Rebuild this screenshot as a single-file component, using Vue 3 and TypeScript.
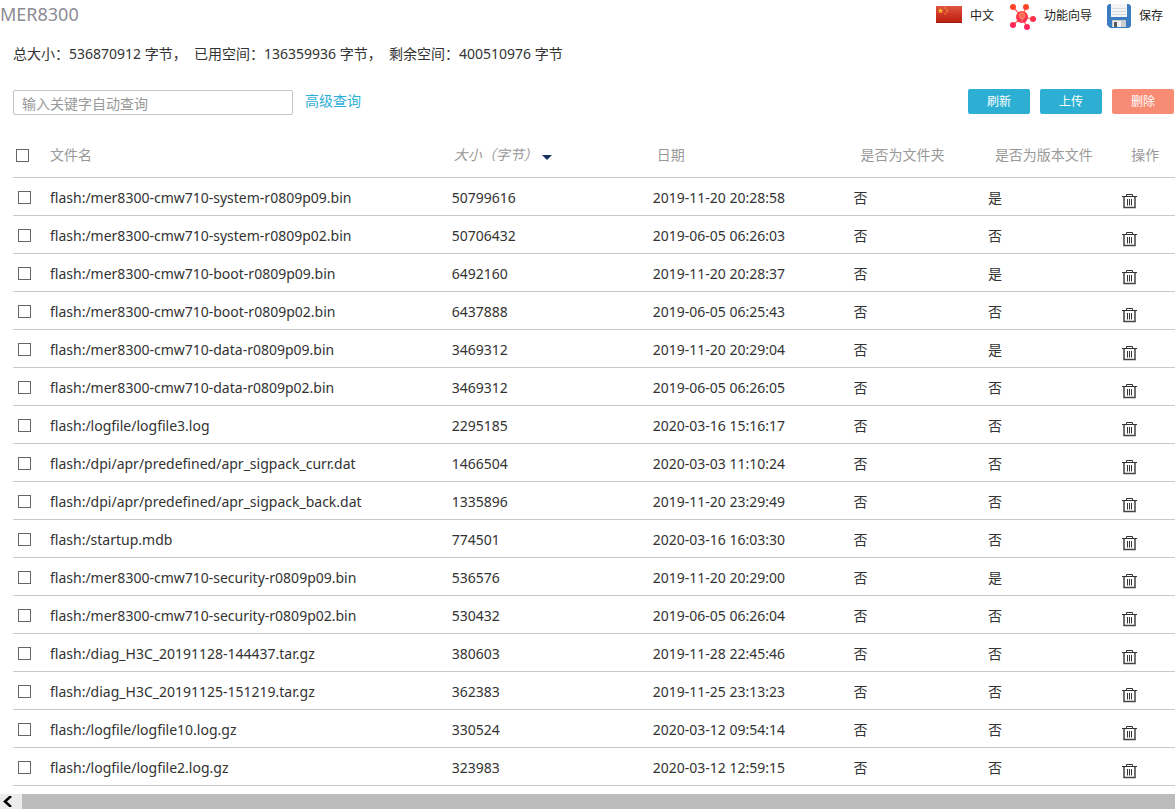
<script setup lang="ts">
import { ref } from 'vue'

interface FlashFile {
  name: string
  size: number
  date: string
  folder: boolean
  version: boolean
}

const raw: [string, number, string, boolean][] = [
  ['mer8300-cmw710-system-r0809p09.bin', 50799616, '2019-11-20 20:28:58', true],
  ['mer8300-cmw710-system-r0809p02.bin', 50706432, '2019-06-05 06:26:03', false],
  ['mer8300-cmw710-boot-r0809p09.bin', 6492160, '2019-11-20 20:28:37', true],
  ['mer8300-cmw710-boot-r0809p02.bin', 6437888, '2019-06-05 06:25:43', false],
  ['mer8300-cmw710-data-r0809p09.bin', 3469312, '2019-11-20 20:29:04', true],
  ['mer8300-cmw710-data-r0809p02.bin', 3469312, '2019-06-05 06:26:05', false],
  ['logfile/logfile3.log', 2295185, '2020-03-16 15:16:17', false],
  ['dpi/apr/predefined/apr_sigpack_curr.dat', 1466504, '2020-03-03 11:10:24', false],
  ['dpi/apr/predefined/apr_sigpack_back.dat', 1335896, '2019-11-20 23:29:49', false],
  ['startup.mdb', 774501, '2020-03-16 16:03:30', false],
  ['mer8300-cmw710-security-r0809p09.bin', 536576, '2019-11-20 20:29:00', true],
  ['mer8300-cmw710-security-r0809p02.bin', 530432, '2019-06-05 06:26:04', false],
  ['diag_H3C_20191128-144437.tar.gz', 380603, '2019-11-28 22:45:46', false],
  ['diag_H3C_20191125-151219.tar.gz', 362383, '2019-11-25 23:13:23', false],
  ['logfile/logfile10.log.gz', 330524, '2020-03-12 09:54:14', false],
  ['logfile/logfile2.log.gz', 323983, '2020-03-12 12:59:15', false],
]

const files: FlashFile[] = raw.map(([name, size, date, version]) => ({
  name: 'flash:/' + name,
  size,
  date,
  folder: false,
  version,
}))

const keyword = ref('')
const selected = ref<string[]>([])
const yesNo = (value: boolean): string => (value ? '是' : '否')

function toggleAll(event: Event): void {
  selected.value = (event.target as HTMLInputElement).checked ? files.map((f) => f.name) : []
}
</script>

<template>
  <div class="page">
    <header class="topbar">
      <h1>MER8300</h1>
      <nav class="tools">
        <a href="#" class="tool">
          <svg class="flag" width="26" height="17" viewBox="0 0 26 17" aria-hidden="true">
            <defs>
              <linearGradient id="flagRed" x1="0" y1="0" x2="0" y2="1">
                <stop offset="0" stop-color="#dd5843" />
                <stop offset="0.5" stop-color="#cf3423" />
                <stop offset="1" stop-color="#b8200f" />
              </linearGradient>
            </defs>
            <rect width="26" height="17" fill="url(#flagRed)" />
            <path d="M4.500 2l.8 1.800 2 .2-1.500 1.300.5 2-1.800-1.100-1.800 1.100.5-2L1.700 4l2-.2z" fill="#fbb52a" />
            <g fill="#f3a02a">
              <circle cx="9" cy="2" r=".8" /><circle cx="11" cy="4" r=".8" />
              <circle cx="11" cy="6" r=".8" /><circle cx="9" cy="8" r=".8" />
            </g>
            <path d="M0 16.500h26" stroke="#9c1b0e" />
          </svg>
          <span>中文</span>
        </a>
        <a href="#" class="tool">
          <svg width="27" height="27" viewBox="0 0 27 27" aria-hidden="true">
            <defs>
              <linearGradient id="hub" gradientUnits="userSpaceOnUse" x1="0" y1="0" x2="0" y2="27">
                <stop offset="0" stop-color="#ff4a1c" />
                <stop offset="1" stop-color="#ff2068" />
              </linearGradient>
            </defs>
            <path d="M13 14L4 4M13 14L17 4M13 14L24 16M13 14L4 22M13 14L18 24" stroke="#ff5a4c" stroke-width="1.200" />
            <g fill="url(#hub)">
              <circle cx="13" cy="14" r="6" /><circle cx="4" cy="4" r="3" />
              <circle cx="17" cy="4" r="3" /><circle cx="24" cy="16" r="3" />
              <circle cx="4" cy="22" r="3" /><circle cx="18" cy="24" r="3" />
            </g>
            <path d="M11.500 16c0-1.500-1.300-2-1.300-3.500a2.800 2.800 0 0 1 5.600 0c0 1.500-1.300 2-1.300 3.500zM12 18h2" fill="#ff6a54" stroke="#ff9484" stroke-width=".8" />
          </svg>
          <span>功能向导</span>
        </a>
        <a href="#" class="tool">
          <svg width="24" height="24" viewBox="0 0 24 24" aria-hidden="true">
            <path d="M2 0h20l2 2v20l-2 2H3l-3-3V2z" fill="#3c7cc0" />
            <path d="M4 0h16v13H4z" fill="#f3f4f5" />
            <path d="M5 4.500h14M5 7.500h14M5 10.500h14" stroke="#d6dadd" />
            <path d="M5 16h14v7H5z" fill="#c9cdd0" />
            <path d="M6 17h8v6H6z" fill="#f0f1f2" />
            <path d="M7 18h3v5H7z" fill="#55595e" />
          </svg>
          <span>保存</span>
        </a>
      </nav>
    </header>

    <p class="summary">
      总大小：536870912 字节，&nbsp;&nbsp;已用空间：136359936 字节，&nbsp;&nbsp;剩余空间：400510976 字节
    </p>

    <div class="toolbar">
      <input v-model="keyword" class="search" type="text" placeholder="输入关键字自动查询" aria-label="输入关键字自动查询" />
      <a href="#" class="advanced">高级查询</a>
      <div class="actions">
        <button type="button">刷新</button>
        <button type="button">上传</button>
        <button type="button" class="danger">删除</button>
      </div>
    </div>

    <div class="grid">
      <table>
        <colgroup>
          <col class="c-check" /><col class="c-name" /><col class="c-wide" /><col class="c-wide" />
          <col class="c-flag" /><col class="c-flag" /><col />
        </colgroup>
        <thead>
          <tr>
            <th class="check">
              <input type="checkbox" aria-label="全选" :checked="selected.length === files.length" @change="toggleAll" />
            </th>
            <th>文件名</th>
            <th class="sorted" aria-sort="descending">大小（字节）<i class="caret"></i></th>
            <th class="mid">日期</th>
            <th class="far">是否为文件夹</th>
            <th class="far">是否为版本文件</th>
            <th class="last">操作</th>
          </tr>
        </thead>
        <tbody>
          <tr v-for="file in files" :key="file.name">
            <td class="check"><input v-model="selected" type="checkbox" :value="file.name" :aria-label="file.name" /></td>
            <td>{{ file.name }}</td>
            <td>{{ file.size }}</td>
            <td>{{ file.date }}</td>
            <td>{{ yesNo(file.folder) }}</td>
            <td>{{ yesNo(file.version) }}</td>
            <td>
              <button type="button" class="trash" :aria-label="'删除 ' + file.name">
                <svg width="15" height="16" viewBox="0 0 15 16" aria-hidden="true">
                  <path d="M0 3.500h15M4.500 3V1.500h6V3M5.500 6v6.500M7.500 6v6.500M9.500 6v6.500" fill="none" stroke="#333" />
                  <path d="M2 4v10.500h11V4" fill="none" stroke="#444" stroke-width="1.500" />
                </svg>
              </button>
            </td>
          </tr>
        </tbody>
      </table>
    </div>

    <div class="hscroll">
      <button type="button" aria-label="向左滚动">
        <svg width="9" height="11" viewBox="0 0 9 11" aria-hidden="true">
          <path d="M8 0L2 5.500L8 11" fill="none" stroke="#000" stroke-width="2.500" />
        </svg>
      </button>
      <div class="thumb"></div>
    </div>
  </div>
</template>

<style>
body {
  background: #fff;
  overflow: hidden;
}
</style>

<style scoped>
.page {
  display: flex;
  flex-direction: column;
  min-height: 100vh;
  overflow: hidden;
  color: #333;
  font-family: 'Noto Sans', 'Noto Sans CJK SC', sans-serif;
  font-size: 14px;
  line-height: 20px;
}
.topbar {
  display: flex;
  justify-content: space-between;
  height: 32px;
}
h1 {
  margin: 0;
  color: #8c8c94;
  font-size: 18px;
  font-weight: 400;
  line-height: 28px;
}
.tools {
  display: flex;
  align-items: center;
  gap: 15px;
  padding-right: 12px;
}
.tool {
  display: flex;
  align-items: center;
  gap: 8px;
  color: #222;
  font-size: 12px;
  text-decoration: none;
}
.flag {
  margin-bottom: 4px;
}
.summary {
  margin: 12px 13px 0;
}
.toolbar {
  display: flex;
  align-items: center;
  height: 27px;
  margin-top: 25px;
  padding-left: 13px;
}
.search {
  box-sizing: border-box;
  width: 280px;
  height: 25px;
  padding: 2px 8px 0;
  border: 1px solid #c4c4c4;
  border-radius: 2px;
  color: #333;
  font: inherit;
}
.search::placeholder {
  color: #999;
  opacity: 1;
}
.advanced {
  margin: 0 0 4px 12px;
  color: #2cafd3;
  text-decoration: none;
}
.actions {
  display: flex;
  gap: 10px;
  margin-left: auto;
  padding: 0 1px 2px 0;
}
.actions button {
  width: 62px;
  height: 25px;
  padding: 1px 0 0;
  border: 0;
  border-radius: 2px;
  background: #2cafd3;
  color: #fff;
  font: inherit;
  font-size: 12px;
}
.actions .danger {
  background: #f88b74;
}
.grid {
  margin: 17px -6px 0 13px;
}
table {
  width: 100%;
  border-collapse: separate;
  border-spacing: 0;
  table-layout: fixed;
}
.c-check {
  width: 29px;
}
.c-name {
  width: 34.4%;
}
.c-wide {
  width: 17.2%;
}
.c-flag {
  width: 11.5%;
}
th,
td {
  box-sizing: border-box;
  height: 38px;
  padding: 2px 0 0 8px;
  border-bottom: 1px solid #c8c8c8;
  text-align: left;
  white-space: nowrap;
}
th {
  height: 45px;
  padding-top: 0;
  color: #999;
  font-weight: 400;
}
.mid {
  padding-left: 12px;
}
.far {
  padding-left: 15px;
}
.last {
  padding-left: 17px;
}
.sorted {
  padding-left: 10px;
  font-style: italic;
}
.caret {
  display: inline-block;
  margin-left: 4px;
  border: 5px solid transparent;
  border-top-color: #17305c;
  border-bottom: 0;
}
.check {
  padding-left: 5px;
}
th.check {
  padding-left: 3px;
}
.check input {
  display: block;
  box-sizing: border-box;
  width: 13px;
  height: 13px;
  margin: 0;
  border: 1px solid #666;
  background: #fff;
  appearance: none;
}
.check input:checked {
  background: #2cafd3;
}
.trash {
  display: block;
  margin-top: 6px;
  padding: 0;
  border: 0;
  background: none;
}
.trash svg {
  display: block;
}
.hscroll {
  display: flex;
  height: 15px;
  margin-top: auto;
  background: #f0f0f0;
}
.hscroll button {
  width: 22px;
  padding: 0 0 0 3px;
  border: 0;
  background: #ececec;
}
.hscroll svg {
  display: block;
}
.thumb {
  flex: 1;
  background: #bcbcbc;
}
</style>
